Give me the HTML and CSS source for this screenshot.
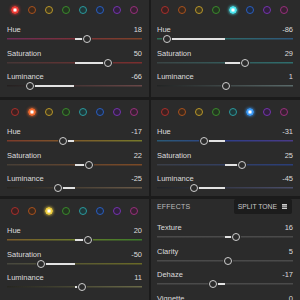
FILE: index.html
```html
<!DOCTYPE html>
<html lang="en">
    <head>
        <meta charset="UTF-8" />
        <meta name="viewport" content="width=device-width, initial-scale=1.0" />
        <title>Color Mix</title>
        <link rel="stylesheet" href="styles.css">
    </head>
    <body>
        <div class="grid">
            <!-- red -->
            <section class="panel red">
                <div class="dots">
                    <span class="dot c-red on"></span><span class="dot c-orange"></span><span class="dot c-yellow"></span><span class="dot c-green"></span><span class="dot c-aqua"></span><span class="dot c-blue"></span><span class="dot c-purple"></span><span class="dot c-magenta"></span>
                </div>
                <div class="row">
                    <div class="head"><span>Hue</span><span>18</span></div>
                    <div class="track hue"><div class="fill" style="left:50%;width:9%"></div><div class="thumb" style="left:59%"></div></div>
                </div>
                <div class="row">
                    <div class="head"><span>Saturation</span><span>50</span></div>
                    <div class="track sat"><div class="fill" style="left:50%;width:25%"></div><div class="thumb" style="left:75%"></div></div>
                </div>
                <div class="row">
                    <div class="head"><span>Luminance</span><span>-66</span></div>
                    <div class="track lum"><div class="fill" style="left:17%;width:33%"></div><div class="thumb" style="left:17%"></div></div>
                </div>
            </section>

            <!-- aqua -->
            <section class="panel aqua">
                <div class="dots">
                    <span class="dot c-red"></span><span class="dot c-orange"></span><span class="dot c-yellow"></span><span class="dot c-green"></span><span class="dot c-aqua on"></span><span class="dot c-blue"></span><span class="dot c-purple"></span><span class="dot c-magenta"></span>
                </div>
                <div class="row">
                    <div class="head"><span>Hue</span><span>-86</span></div>
                    <div class="track hue"><div class="fill" style="left:7%;width:43%"></div><div class="thumb" style="left:7%"></div></div>
                </div>
                <div class="row">
                    <div class="head"><span>Saturation</span><span>29</span></div>
                    <div class="track sat"><div class="fill" style="left:50%;width:14.5%"></div><div class="thumb" style="left:64.5%"></div></div>
                </div>
                <div class="row">
                    <div class="head"><span>Luminance</span><span>1</span></div>
                    <div class="track lum"><div class="fill" style="left:50%;width:0.5%"></div><div class="thumb" style="left:50.5%"></div></div>
                </div>
            </section>

            <!-- orange -->
            <section class="panel orange">
                <div class="dots">
                    <span class="dot c-red"></span><span class="dot c-orange on"></span><span class="dot c-yellow"></span><span class="dot c-green"></span><span class="dot c-aqua"></span><span class="dot c-blue"></span><span class="dot c-purple"></span><span class="dot c-magenta"></span>
                </div>
                <div class="row">
                    <div class="head"><span>Hue</span><span>-17</span></div>
                    <div class="track hue"><div class="fill" style="left:41.5%;width:8.5%"></div><div class="thumb" style="left:41.5%"></div></div>
                </div>
                <div class="row">
                    <div class="head"><span>Saturation</span><span>22</span></div>
                    <div class="track sat"><div class="fill" style="left:50%;width:11%"></div><div class="thumb" style="left:61%"></div></div>
                </div>
                <div class="row">
                    <div class="head"><span>Luminance</span><span>-25</span></div>
                    <div class="track lum"><div class="fill" style="left:37.5%;width:12.5%"></div><div class="thumb" style="left:37.5%"></div></div>
                </div>
            </section>

            <!-- blue -->
            <section class="panel blue">
                <div class="dots">
                    <span class="dot c-red"></span><span class="dot c-orange"></span><span class="dot c-yellow"></span><span class="dot c-green"></span><span class="dot c-aqua"></span><span class="dot c-blue on"></span><span class="dot c-purple"></span><span class="dot c-magenta"></span>
                </div>
                <div class="row">
                    <div class="head"><span>Hue</span><span>-31</span></div>
                    <div class="track hue"><div class="fill" style="left:34.5%;width:15.5%"></div><div class="thumb" style="left:34.5%"></div></div>
                </div>
                <div class="row">
                    <div class="head"><span>Saturation</span><span>25</span></div>
                    <div class="track sat"><div class="fill" style="left:50%;width:12.5%"></div><div class="thumb" style="left:62.5%"></div></div>
                </div>
                <div class="row">
                    <div class="head"><span>Luminance</span><span>-45</span></div>
                    <div class="track lum"><div class="fill" style="left:27.5%;width:22.5%"></div><div class="thumb" style="left:27.5%"></div></div>
                </div>
            </section>

            <!-- yellow -->
            <section class="panel yellow">
                <div class="dots">
                    <span class="dot c-red"></span><span class="dot c-orange"></span><span class="dot c-yellow on"></span><span class="dot c-green"></span><span class="dot c-aqua"></span><span class="dot c-blue"></span><span class="dot c-purple"></span><span class="dot c-magenta"></span>
                </div>
                <div class="row">
                    <div class="head"><span>Hue</span><span>20</span></div>
                    <div class="track hue"><div class="fill" style="left:50%;width:10%"></div><div class="thumb" style="left:60%"></div></div>
                </div>
                <div class="row">
                    <div class="head"><span>Saturation</span><span>-50</span></div>
                    <div class="track sat"><div class="fill" style="left:25%;width:25%"></div><div class="thumb" style="left:25%"></div></div>
                </div>
                <div class="row">
                    <div class="head"><span>Luminance</span><span>11</span></div>
                    <div class="track lum"><div class="fill" style="left:50%;width:5.5%"></div><div class="thumb" style="left:55.5%"></div></div>
                </div>
            </section>

            <!-- effects -->
            <section class="panel effects">
                <div class="effects-head">
                    <span class="title">EFFECTS</span>
                    <button class="split">SPLIT TONE
                        <svg width="5" height="5" viewBox="0 0 5 5"><rect x="0" y="0" width="5" height="5" fill="#cfcfcf"/><rect x="0" y="1.6" width="5" height="0.6" fill="#1c1c1c"/><rect x="0" y="3.2" width="5" height="0.6" fill="#1c1c1c"/></svg>
                    </button>
                </div>
                <div class="row">
                    <div class="head"><span>Texture</span><span>16</span></div>
                    <div class="track"><div class="fill" style="left:50%;width:8%"></div><div class="thumb" style="left:58%"></div></div>
                </div>
                <div class="row">
                    <div class="head"><span>Clarity</span><span>5</span></div>
                    <div class="track"><div class="fill" style="left:50%;width:2.5%"></div><div class="thumb" style="left:52.5%"></div></div>
                </div>
                <div class="row">
                    <div class="head"><span>Dehaze</span><span>-17</span></div>
                    <div class="track"><div class="fill" style="left:41.5%;width:8.5%"></div><div class="thumb" style="left:41.5%"></div></div>
                </div>
                <div class="row">
                    <div class="head"><span>Vignette</span><span>0</span></div>
                    <div class="track"><div class="thumb" style="left:50%"></div></div>
                </div>
            </section>
        </div>
    </body>
</html>
```

FILE: styles.css
```css
html, body {
    margin: 0;
    height: 300px;
    overflow: hidden;
    background-color: #1b1b1b;
    font-family: "Liberation Sans", Arial, sans-serif;
    color: #dcdcdc;
}
.grid {
    display: grid;
    grid-template-columns: 149px 149px;
    grid-template-rows: 99px 96px 110px;
    column-gap: 2px;
    row-gap: 3px;
    margin-top: -2px;
}
.panel {
    background-color: #2b2b2b;
    padding: 8px 7px 0 7px;
    overflow: hidden;
}
.panel:nth-child(even) {
    padding-left: 6px;
}

/* color dots */
.dots {
    display: flex;
    gap: 9px;
    height: 8px;
    padding-left: 4px;
    margin-bottom: 11px;
}
.dot {
    box-sizing: border-box;
    width: 8px;
    height: 8px;
    border-radius: 50%;
    border: 1.5px solid var(--c);
    background: color-mix(in srgb, var(--c) 22%, #1c1c1c);
}
.dot.on {
    border-color: var(--hi);
    background: radial-gradient(circle, #ffffff 0 18%, var(--hi) 60%);
    box-shadow: 0 0 3px var(--hi);
}
.c-red { --c: #a8302c; --hi: #f03a34; }
.c-orange { --c: #a8521e; --hi: #f26a2e; }
.c-yellow { --c: #b8962a; --hi: #f0d040; }
.c-green { --c: #3a8a2c; --hi: #50c040; }
.c-aqua { --c: #2a9a9e; --hi: #4ae6f0; }
.c-blue { --c: #2a5ec0; --hi: #3a9af8; }
.c-purple { --c: #7632b0; --hi: #a050e8; }
.c-magenta { --c: #98307c; --hi: #d040a8; }

/* slider rows */
.row {
    margin-bottom: 5.5px;
}
.head {
    display: flex;
    justify-content: space-between;
    height: 10px;
    line-height: 10px;
    font-size: 7.5px;
}
.track {
    position: relative;
    height: 8px;
    background: linear-gradient(#4a4a4a, #4a4a4a) center / 100% 1.5px no-repeat;
}
.fill {
    position: absolute;
    top: 3px;
    height: 2px;
    background-color: #e2e2e2;
}
.thumb {
    position: absolute;
    top: 50%;
    box-sizing: border-box;
    width: 8px;
    height: 8px;
    border-radius: 50%;
    border: 1.5px solid #cfcfcf;
    background-color: #2b2b2b;
    box-shadow: 0 0 0 1px #2b2b2b;
    transform: translate(-50%, -50%);
}

.red .hue { background-image: linear-gradient(90deg, #6e2c58, #7c3038, #7c4228); }
.red .sat { background-image: linear-gradient(90deg, #463636, #7c2e2e); }
.red .lum { background-image: linear-gradient(90deg, #242020, #6a4848); }
.aqua .hue { background-image: linear-gradient(90deg, #2e6a52, #2e6a6a, #2e567a); }
.aqua .sat { background-image: linear-gradient(90deg, #3a4444, #2e6e6e); }
.aqua .lum { background-image: linear-gradient(90deg, #222424, #5a6a6a); }
.orange .hue { background-image: linear-gradient(90deg, #7c3a2a, #7c5a2a, #767a2a); }
.orange .sat { background-image: linear-gradient(90deg, #463e36, #7c4a26); }
.orange .lum { background-image: linear-gradient(90deg, #262420, #6a5a48); }
.blue .hue { background-image: linear-gradient(90deg, #2a5a76, #2e3e88, #4a3a88); }
.blue .sat { background-image: linear-gradient(90deg, #3a3e46, #2a3e7a); }
.blue .lum { background-image: linear-gradient(90deg, #222428, #4a4e6a); }
.yellow .hue { background-image: linear-gradient(90deg, #7c5a2a, #6a7a2a, #3a7c2a); }
.yellow .sat { background-image: linear-gradient(90deg, #46463e, #6a6a26); }
.yellow .lum { background-image: linear-gradient(90deg, #262620, #6a6a48); }

/* effects panel */
.effects {
    padding-top: 0;
}
.effects-head {
    display: flex;
    justify-content: space-between;
    align-items: center;
    height: 15px;
    margin-bottom: 9px;
}
.title {
    font-size: 7px;
    color: #bdbdbd;
    letter-spacing: 0.2px;
}
.split {
    display: flex;
    align-items: center;
    gap: 5px;
    height: 15px;
    margin-right: 1px;
    padding: 0 5px 0 4px;
    border: none;
    border-radius: 2px;
    background-color: #1c1c1c;
    color: #c8c8c8;
    font-family: "Liberation Sans", Arial, sans-serif;
    font-size: 6.8px;
}
```
